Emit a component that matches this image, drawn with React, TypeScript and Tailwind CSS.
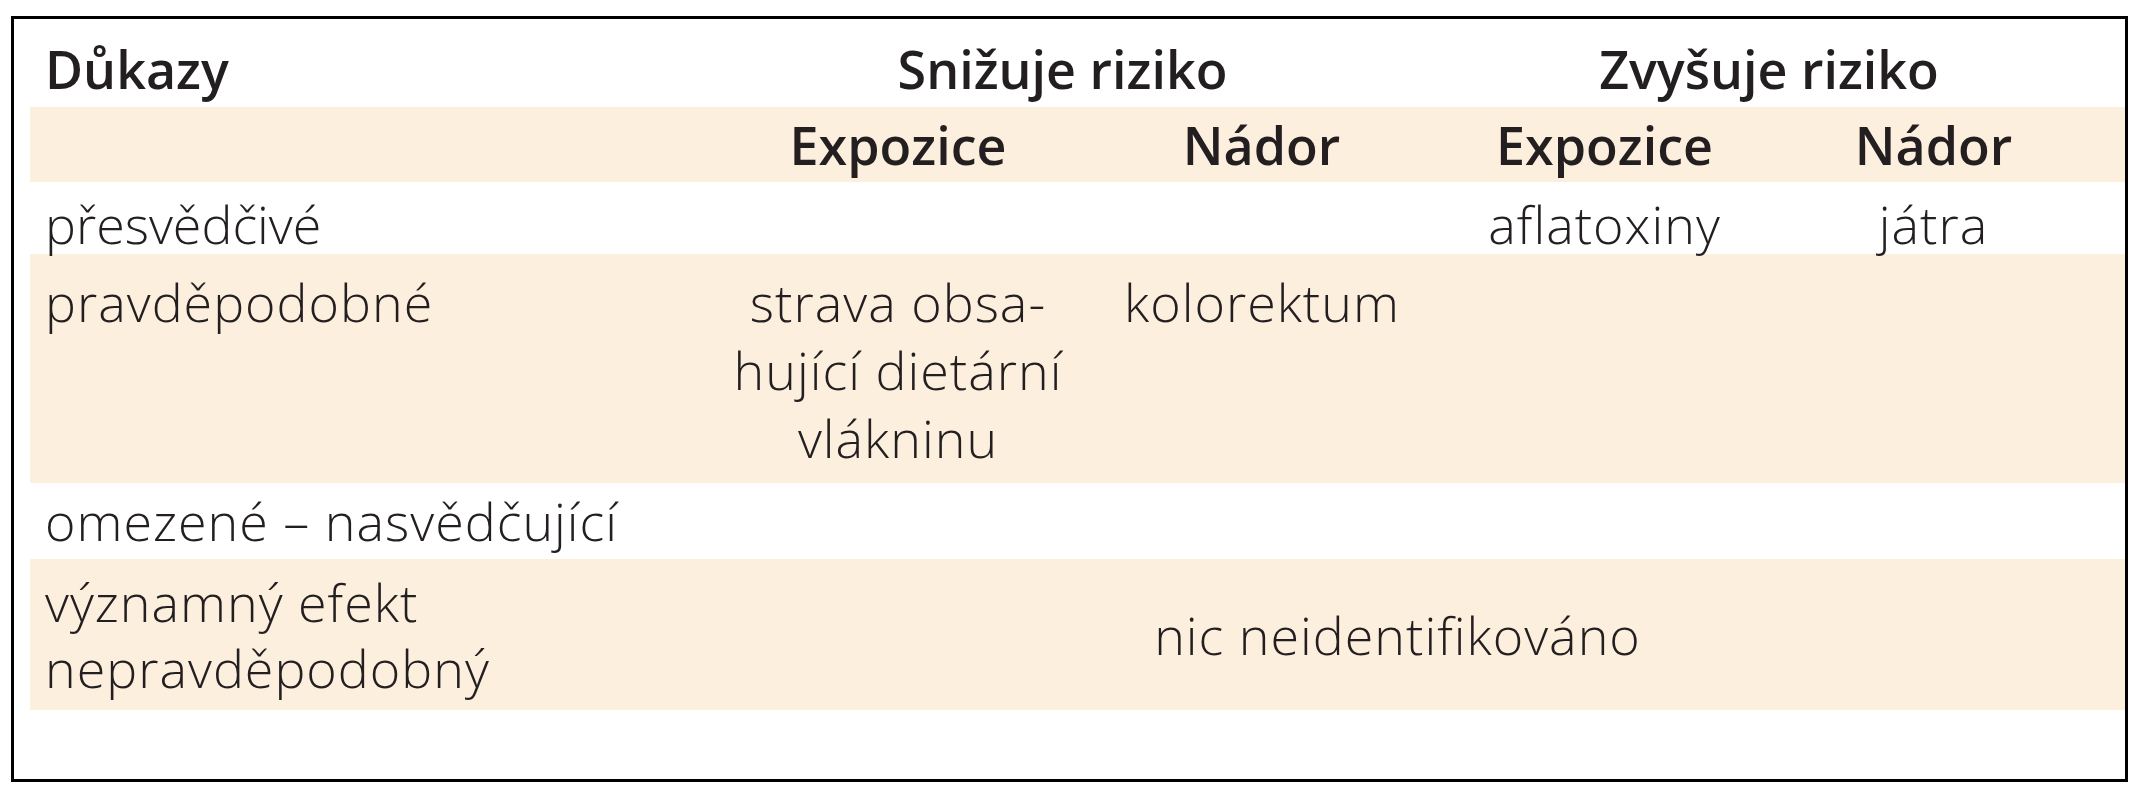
export default function App() {
  const cols = "grid grid-cols-[683px_370px_357px_329px_329px]";
  return (
    <div
      className="min-h-[800px] bg-white pl-[11px] pt-[16px] text-[#231f20]"
      style={{ fontFamily: "'Open Sans', Lato, sans-serif" }}
    >
      <div className="w-[2117px] h-[766px] border-[3px] border-black pl-[16px] text-[52px] leading-[68px] font-light tracking-[1px]">
        {/* header row 1 */}
        <div className={`${cols} h-[88px] items-center pt-[12px] font-semibold tracking-normal`}>
          <div className="pl-[15px]">Důkazy</div>
          <div className="col-span-2 text-center pr-[28px]">Snižuje riziko</div>
          <div className="col-span-2 text-center">Zvyšuje riziko</div>
        </div>
        {/* header row 2 */}
        <div className={`${cols} h-[75px] items-center bg-[#fdefdd] font-semibold tracking-normal`}>
          <div />
          <div className="text-center">Expozice</div>
          <div className="text-center">Nádor</div>
          <div className="text-center">Expozice</div>
          <div className="text-center">Nádor</div>
        </div>
        <div className={`${cols} h-[72px] items-center pt-[8px]`}>
          <div className="pl-[15px] tracking-normal">přesvědčivé</div>
          <div />
          <div />
          <div className="text-center">aflatoxiny</div>
          <div className="text-center">játra</div>
        </div>
        <div className={`${cols} h-[229px] items-start pt-[14px] bg-[#fdefdd]`}>
          <div className="pl-[15px]">pravděpodobné</div>
          <div className="text-center">
            strava obsa-
            <br />
            hující dietární
            <br />
            vlákninu
          </div>
          <div className="pl-[41px]">kolorektum</div>
          <div />
          <div />
        </div>
        <div className={`${cols} h-[76px] items-center`}>
          <div className="pl-[15px]">omezené – nasvědčující</div>
        </div>
        <div className={`${cols} h-[151px] items-center bg-[#fdefdd] leading-[66px]`}>
          <div className="pl-[15px]">
            významný efekt
            <br />
            nepravděpodobný
          </div>
          <div className="col-span-4 text-center pr-[16px]">nic neidentifikováno</div>
        </div>
      </div>
    </div>
  );
}
